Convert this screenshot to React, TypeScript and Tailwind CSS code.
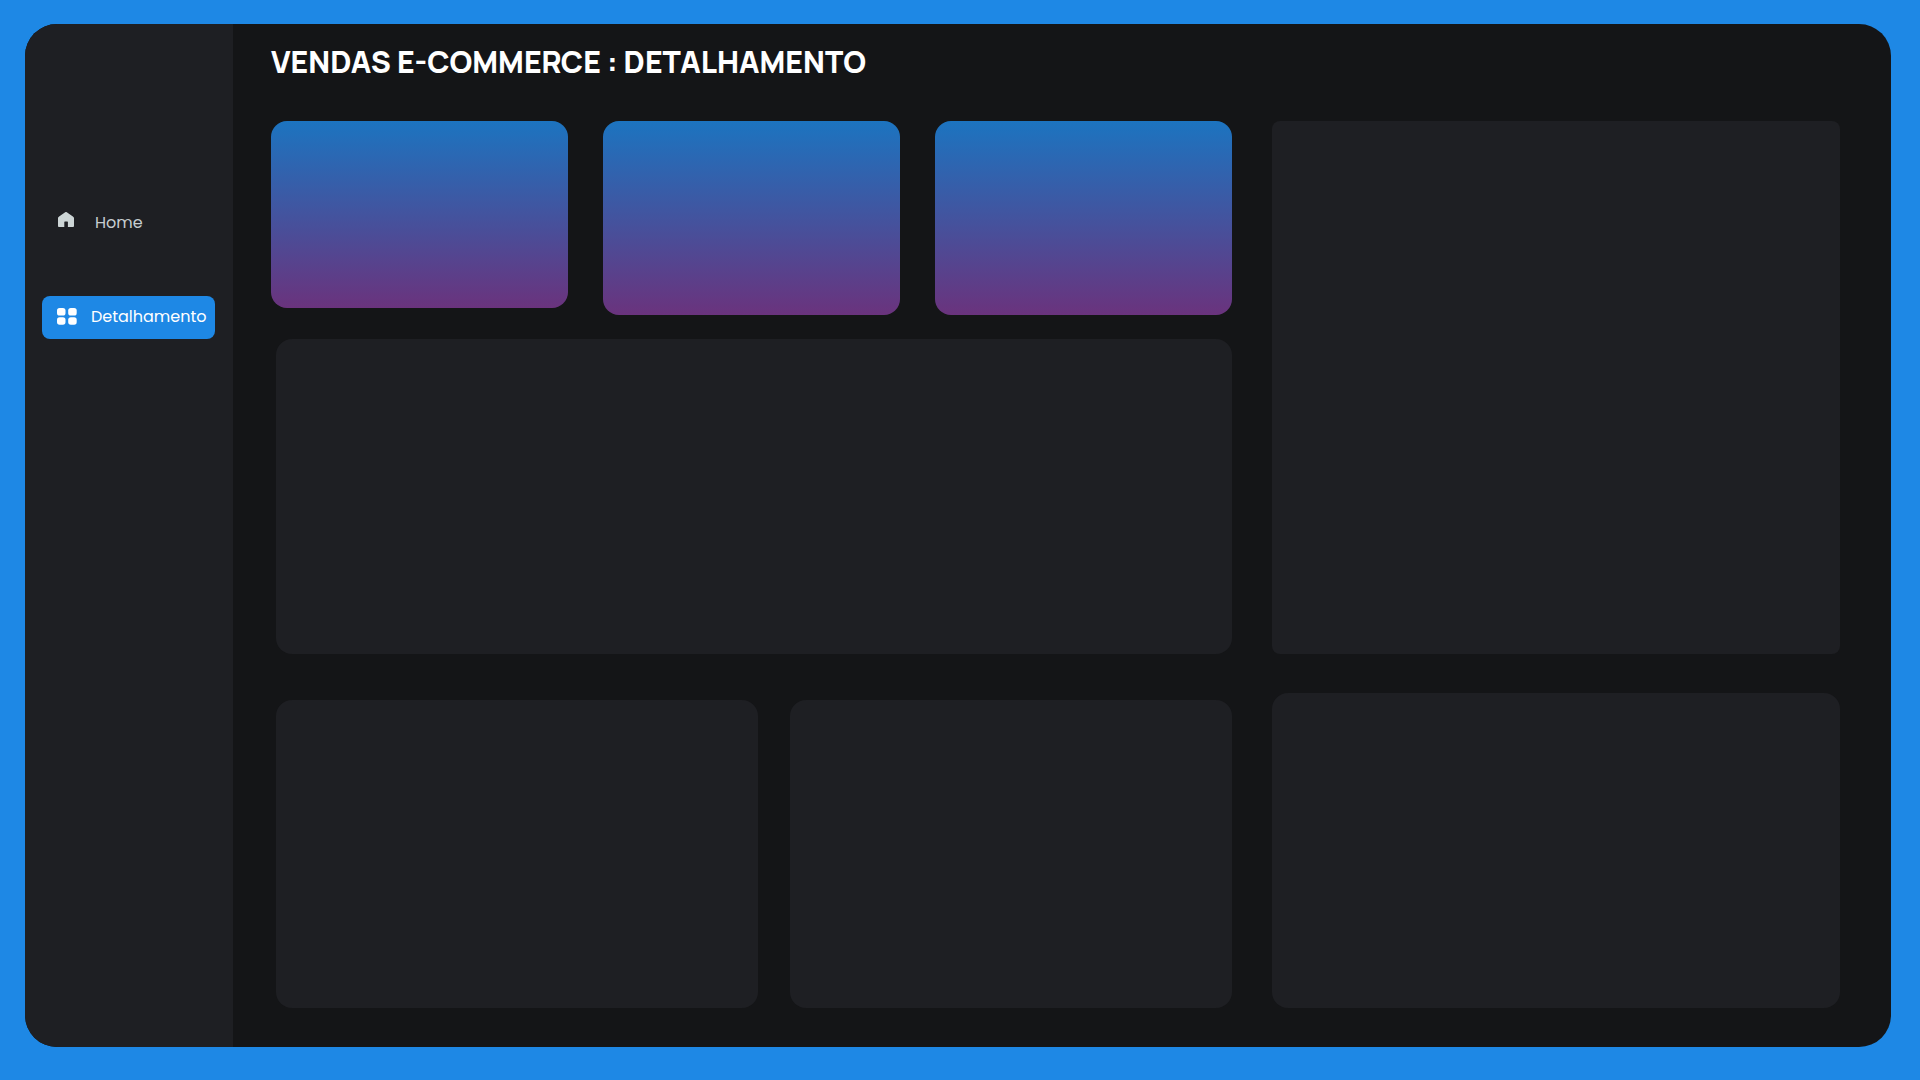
import React from "react";

function HomeIcon() {
  return (
    <svg className="h-[16px] w-[16px] shrink-0" viewBox="0 0 16 16" fill="#cdd5d6">
      <path d="M7.2.3a1.2 1.2 0 0 1 1.6 0l6.1 4.2c.7.5 1.1 1 1.1 1.9v7.4c0 .8-.4 1.2-1.2 1.2H9.900V10c0-.4-.2-.6-.6-.6H6.900c-.4 0-.6.2-.6.6v5H1.200C.400 15 0 14.600 0 13.800V6.400c0-.9.4-1.400 1.100-1.900z" />
    </svg>
  );
}

function GridIcon() {
  return (
    <svg className="h-[17px] w-[20px] shrink-0" viewBox="0 0 20 17" fill="#fff">
      <rect x="0" y="0" width="8.500" height="7.500" rx="2.600" />
      <rect x="11.200" y="0" width="8.500" height="7.500" rx="2.600" />
      <rect x="0" y="9.200" width="8.500" height="7.500" rx="2.600" />
      <rect x="11.200" y="9.200" width="8.500" height="7.500" rx="2.600" />
    </svg>
  );
}

function Sidebar() {
  return (
    <nav className="w-[207.5px] shrink-0 bg-[#1e1f23] pl-[17px] pt-[176px] text-base leading-6 font-['Poppins','Inter',sans-serif]">
      <a className="flex h-[43px] w-[173px] items-center pl-[16px] text-[#c6cdd0]">
        <span className="-mt-[4px]">
          <HomeIcon />
        </span>
        <span className="ml-[21px] mt-[3px] font-normal">Home</span>
      </a>
      <a className="mt-[53px] flex h-[43px] w-[173px] items-center rounded-[8px] bg-[#1e88e5] pl-[15px] text-white">
        <span className="-mt-[3px]">
          <GridIcon />
        </span>
        <span className="-mt-[2px] ml-[14px] font-normal">Detalhamento</span>
      </a>
    </nav>
  );
}

export default function App() {
  return (
    <div className="h-[1080px] w-[1920px] overflow-hidden bg-[#1e88e5] pl-[25px] pt-[24px]">
      <div className="flex h-[1023px] w-[1866px] overflow-hidden rounded-[32px] bg-[#141517]">
        <Sidebar />
        <main className="pl-[38.5px]">
          <h1 className="flex h-[97px] items-start pt-[19px] text-[30px] leading-[38px] font-extrabold whitespace-nowrap text-white font-['Manrope','Inter',sans-serif]">
            VENDAS E-COMMERCE : DETALHAMENTO
          </h1>
          <div className="flex gap-[40px]">
            <div className="flex w-[961px] flex-col">
              <div className="flex h-[218px] items-start gap-[35px]">
                <div className="h-[187px] w-[297px] rounded-[16px] bg-[linear-gradient(180deg,#1c74c0,#6a337d)]" />
                <div className="h-[194px] w-[297px] rounded-[16px] bg-[linear-gradient(180deg,#1c74c0,#6a337d)]" />
                <div className="h-[194px] w-[297px] rounded-[16px] bg-[linear-gradient(180deg,#1c74c0,#6a337d)]" />
              </div>
              <div className="ml-[5px] h-[315px] rounded-[16px] bg-[#1e1f23]" />
              <div className="mt-[46px] ml-[5px] flex h-[308px] gap-[32px]">
                <div className="w-[482px] rounded-[16px] bg-[#1e1f23]" />
                <div className="w-[442px] rounded-[16px] bg-[#1e1f23]" />
              </div>
            </div>
            <div className="flex w-[568px] flex-col gap-[39px]">
              <div className="h-[533px] rounded-[8px] bg-[#1e1f23]" />
              <div className="h-[315px] rounded-[16px] bg-[#1e1f23]" />
            </div>
          </div>
        </main>
      </div>
    </div>
  );
}
